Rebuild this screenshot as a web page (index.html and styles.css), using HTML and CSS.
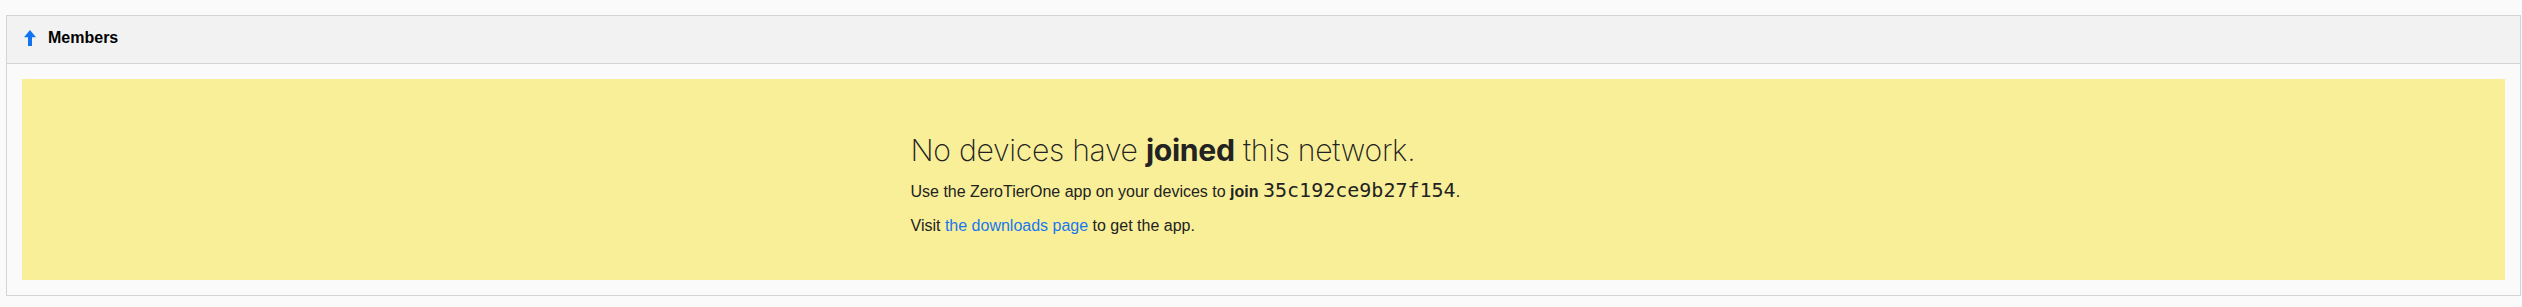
FILE: index.html
```html
<!DOCTYPE html>
<html lang="en">
<head>
    <meta charset="UTF-8">
    <title>Members</title>
    <link rel="stylesheet" href="styles.css">
</head>
<body>
    <div class="panel">
        <div class="panel-heading">
            <svg class="arrow" width="12" height="16" viewBox="0 0 12 16" aria-hidden="true">
                <path d="M6 0 L12 7.2 L8 7.2 L8 16 L4 16 L4 7.2 L0 7.2 Z" fill="#1273f2"/>
            </svg>
            <span class="panel-title">Members</span>
        </div>
        <div class="panel-body">
            <div class="notice">
                <div class="notice-inner">
                    <h3>No devices have <b>joined</b> this network.</h3>
                    <p>Use the ZeroTierOne app on your devices to <b>join</b> <code>35c192ce9b27f154</code>.</p>
                    <p>Visit <a href="#">the downloads page</a> to get the app.</p>
                </div>
            </div>
        </div>
    </div>
</body>
</html>
```

FILE: styles.css
```css
body {
    margin: 15px 1px 0 6px;
    background: #fafafa;
    font-family: "Liberation Sans", Arial, sans-serif;
    color: #333;
}
.panel {
    border: 1px solid #d4d4d4;
    background: #fafafa;
}
.panel-heading {
    display: flex;
    align-items: center;
    height: 47px;
    padding: 0 17px;
    gap: 12px;
    background: #f2f2f2;
    border-bottom: 1px solid #d4d4d4;
}
.arrow {
    display: block;
    margin-top: -3px;
}
.panel-title {
    font-size: 16px;
    font-weight: bold;
    color: #000;
    margin-top: -4px;
}
.panel-body {
    padding: 15px;
}
.notice {
    background: #f9ef99;
    padding: 35px 0 32px;
}
.notice-inner {
    width: 706px;
    margin: 0 auto;
}
h3 {
    font-family: Inter, "Liberation Sans", sans-serif;
    font-weight: 200;
    font-size: 30.2px;
    letter-spacing: -0.3px;
    line-height: 1.1;
    margin: 20px 0 13px;
    color: #222;
}
h3 b {
    font-weight: 700;
}
p {
    font-size: 16px;
    line-height: 24px;
    margin: 0 0 10px;
    color: #222;
}
code {
    font-family: "DejaVu Sans Mono", monospace;
    font-size: 20px;
    line-height: 1;
}
a {
    color: #1677f0;
    text-decoration: none;
}
```
